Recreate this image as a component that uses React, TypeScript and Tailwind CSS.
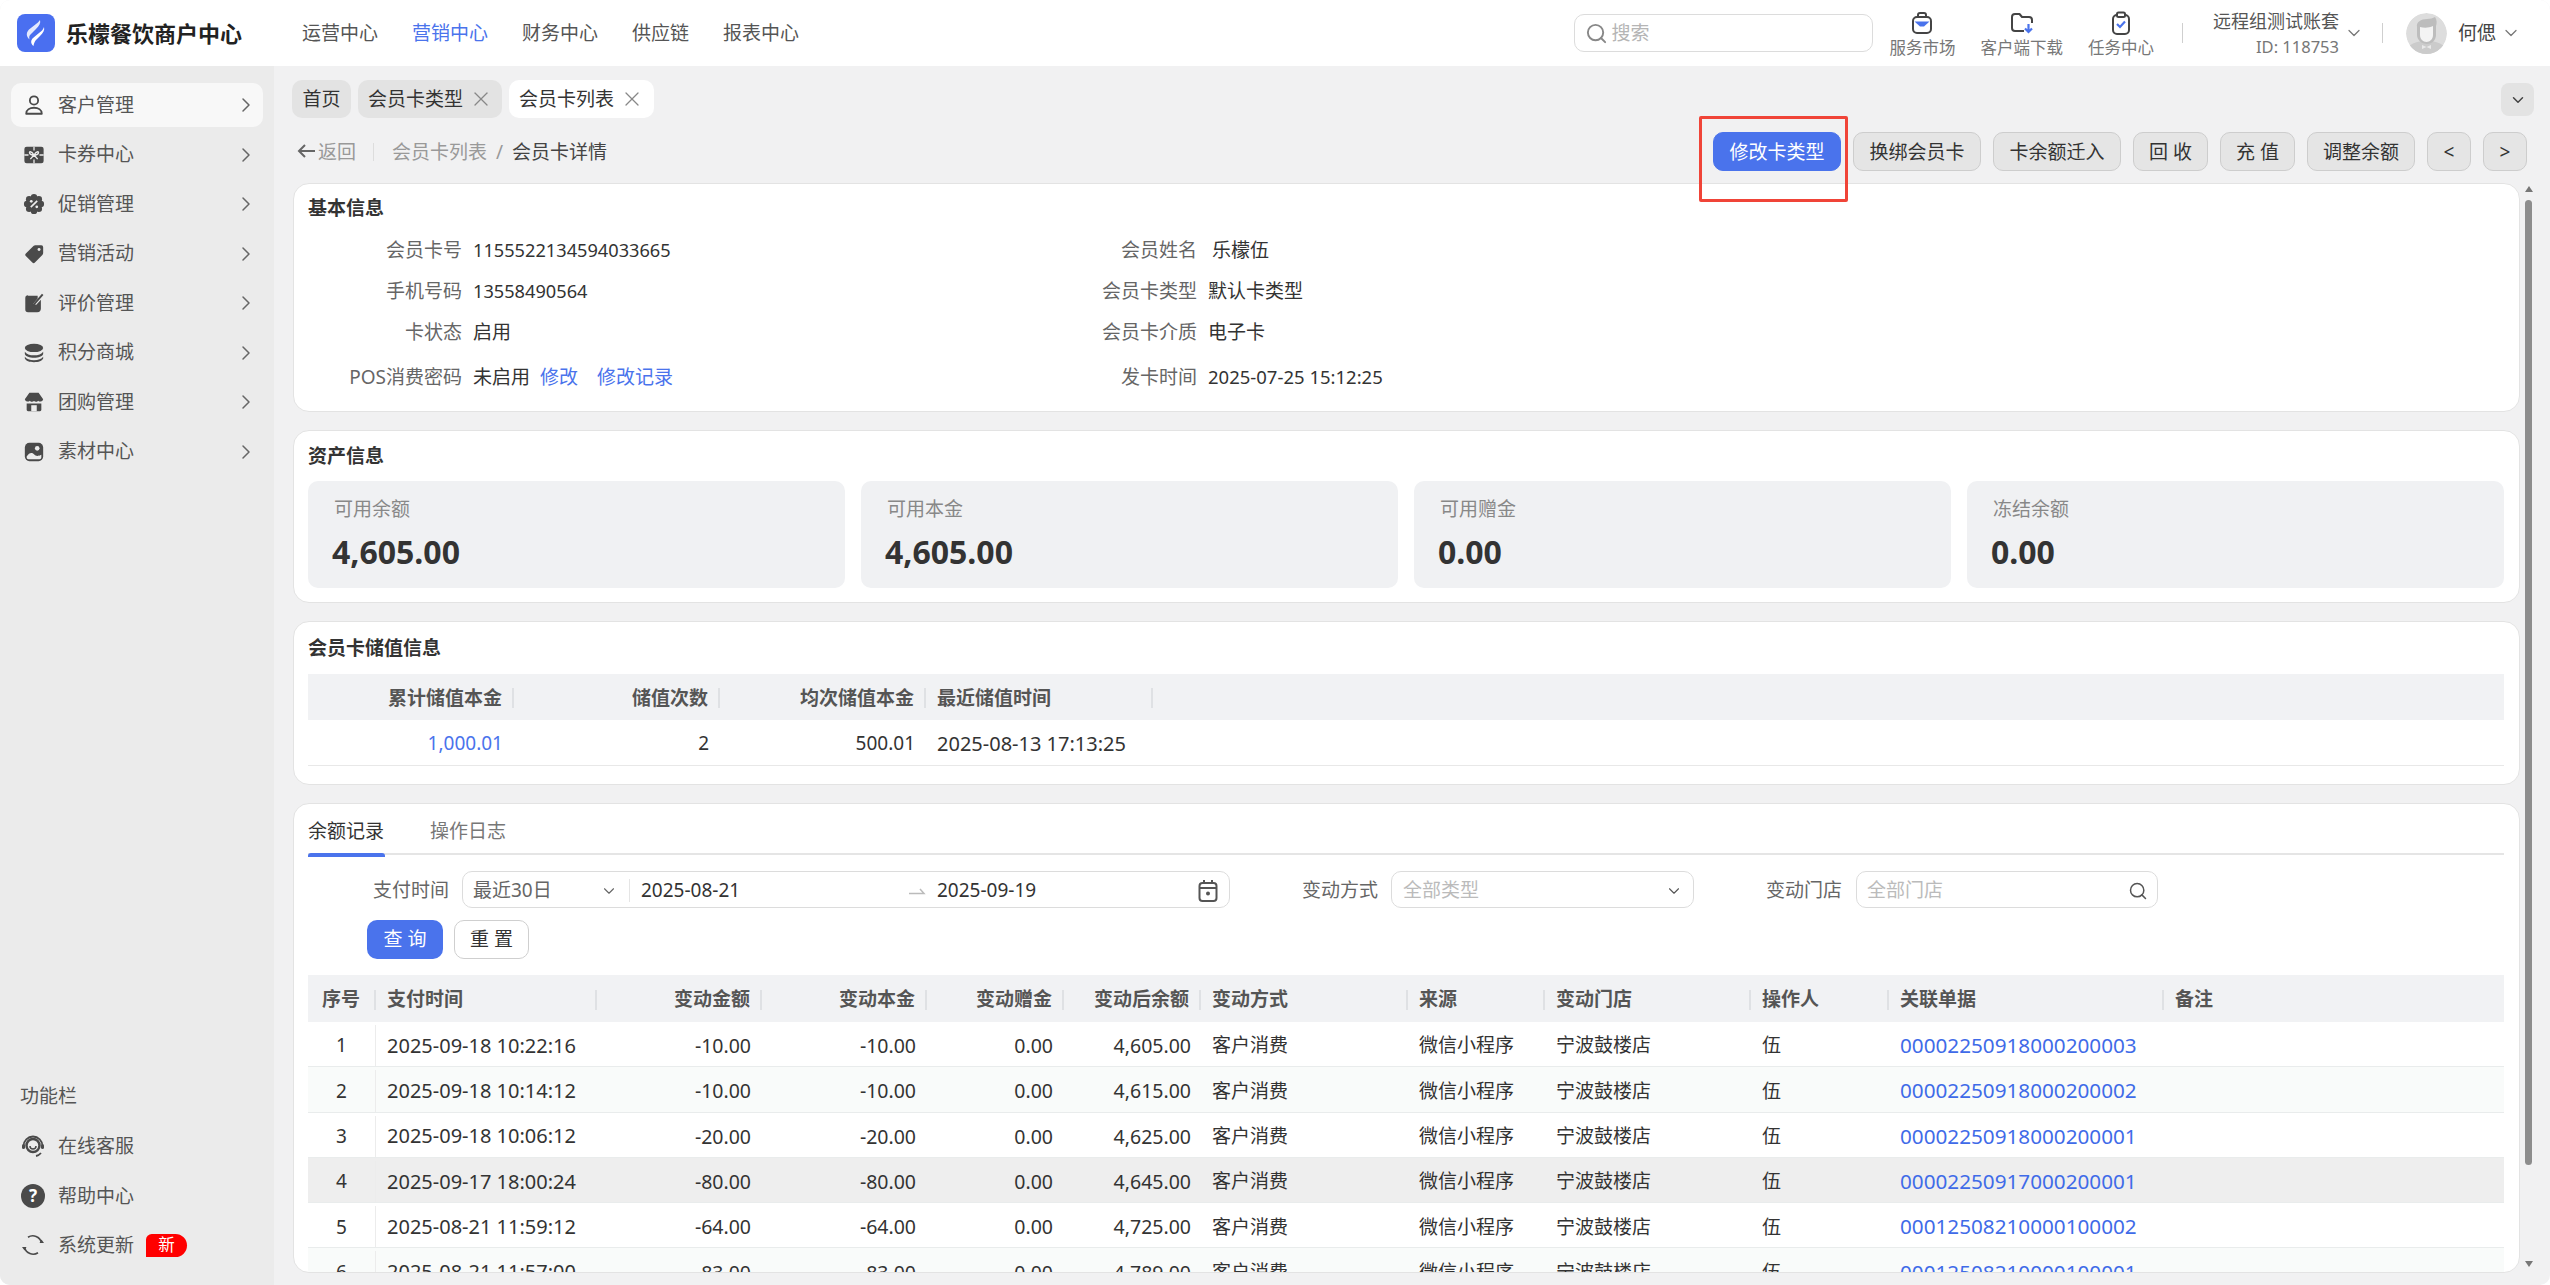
import { ChevronDown, ChevronRight, Search, X } from "lucide-react";
import type { ReactNode } from "react";

const menu = [
  { label: "客户管理", icon: "user", active: true },
  { label: "卡券中心", icon: "gift" },
  { label: "促销管理", icon: "badge" },
  { label: "营销活动", icon: "tag" },
  { label: "评价管理", icon: "review" },
  { label: "积分商城", icon: "coins" },
  { label: "团购管理", icon: "store" },
  { label: "素材中心", icon: "image" },
];

const cols = ["序号", "支付时间", "变动金额", "变动本金", "变动赠金", "变动后余额", "变动方式", "来源", "变动门店", "操作人", "关联单据", "备注"];
const rightCols = [2, 3, 4, 5];

const rows = [
  ["1", "2025-09-18 10:22:16", "-10.00", "-10.00", "0.00", "4,605.00", "00002250918000200003"],
  ["2", "2025-09-18 10:14:12", "-10.00", "-10.00", "0.00", "4,615.00", "00002250918000200002"],
  ["3", "2025-09-18 10:06:12", "-20.00", "-20.00", "0.00", "4,625.00", "00002250918000200001"],
  ["4", "2025-09-17 18:00:24", "-80.00", "-80.00", "0.00", "4,645.00", "00002250917000200001"],
  ["5", "2025-08-21 11:59:12", "-64.00", "-64.00", "0.00", "4,725.00", "00012508210000100002"],
  ["6", "2025-08-21 11:57:00", "-83.00", "-83.00", "0.00", "4,789.00", "00012508210000100001"],
];

const gridCols = "grid grid-cols-[68px_221px_165px_165px_137px_137px_207px_137px_206px_138px_275px_1fr]";

function MenuIcon({ name }: { name: string }) {
  const props = { width: 22, height: 22, viewBox: "0 0 24 24", fill: "#4a4a4a", "aria-hidden": true as const };
  if (name === "user")
    return (
      <svg {...props} fill="none" stroke="#4a4a4a" strokeWidth="2">
        <circle cx="12" cy="7" r="4.5" />
        <path d="M3.5 21.5c0-4.5 4-6.5 8.500-6.500s8.500 2 8.500 6.500z" strokeLinejoin="round" />
      </svg>
    );
  if (name === "gift")
    return (
      <svg {...props}>
        <rect x="1.500" y="3" width="21" height="18" rx="2.500" />
        <path d="M12 3v4M12 17v4M1.500 12H6M18 12h4.500" stroke="#ececec" strokeWidth="1.400" fill="none" />
        <path d="M12 12C9 7 6 8 7.500 10.500 8 11.500 10 12 12 12zM12 12c3-5 6-4 4.500-1.500C16 11.500 14 12 12 12zM12 12l-4 4.500M12 12l4 4.500" stroke="#ececec" strokeWidth="1.500" fill="none" />
      </svg>
    );
  if (name === "badge")
    return (
      <svg {...props}>
        <circle cx="12" cy="12" r="8.500" />
        <circle cx="12" cy="4.500" r="3.500" />
        <circle cx="12" cy="19.500" r="3.500" />
        <circle cx="4.500" cy="12" r="3.500" />
        <circle cx="19.500" cy="12" r="3.500" />
        <circle cx="6.700" cy="6.700" r="3.500" />
        <circle cx="17.300" cy="6.700" r="3.500" />
        <circle cx="6.700" cy="17.300" r="3.500" />
        <circle cx="17.300" cy="17.300" r="3.500" />
        <path d="m8.500 15.500 7-7" stroke="#ececec" strokeWidth="1.800" />
        <circle cx="9" cy="9" r="1.500" fill="#ececec" />
        <circle cx="15" cy="15" r="1.500" fill="#ececec" />
      </svg>
    );
  if (name === "tag")
    return (
      <svg {...props}>
        <path d="M13.500 2.500h6.500a2 2 0 0 1 2 2v6.500a3 3 0 0 1-.9 2.100l-8.100 8.200a2 2 0 0 1-2.800 0l-7.100-7.100a2 2 0 0 1 0-2.800l8.300-8a3 3 0 0 1 2.100-.9z" />
        <circle cx="17.500" cy="7" r="1.600" fill="#ececec" />
      </svg>
    );
  if (name === "review")
    return (
      <svg {...props}>
        <path d="M5.500 4h10.500v3l-5 6 3.500 1 5-5.500v9.500a4 4 0 0 1-4 4h-10a3 3 0 0 1-3-3v-12.500a3 3 0 0 1 3-3z" />
        <path d="M11 14.500 21.500 2.500" stroke="#4a4a4a" strokeWidth="2.200" />
      </svg>
    );
  if (name === "coins")
    return (
      <svg {...props}>
        <ellipse cx="12" cy="6.500" rx="10" ry="4.500" />
        <path d="M2 10.500c1.500 2.500 5.500 4 10 4s8.500-1.500 10-4v2.500c-1 2.700-5 4.200-10 4.200S3 15.700 2 13z" />
        <path d="M2 16c1.500 2.500 5.500 3.800 10 3.800s8.500-1.300 10-3.800v2c-1 2.700-5 4-10 4s-9-1.300-10-4z" />
      </svg>
    );
  if (name === "store")
    return (
      <svg {...props}>
        <path d="M7 2h10l5 7a3.200 3.200 0 0 1-5.500 1.500 3.300 3.300 0 0 1-4.500.5 3.300 3.300 0 0 1-4.500-.500A3.200 3.200 0 0 1 2 9z" />
        <path d="M4 13.500h16v7a1.500 1.500 0 0 1-1.500 1.500h-13a1.500 1.500 0 0 1-1.500-1.500z" />
        <rect x="9" y="15.500" width="6" height="6.500" fill="#ececec" />
      </svg>
    );
  return (
    <svg {...props}>
      <rect x="2" y="2" width="20" height="20" rx="5" />
      <circle cx="15.500" cy="8" r="2.500" fill="#ececec" />
      <path d="M4 17c3-5 6-4.500 8-2.500s4 2.500 8 .5v3a2 2 0 0 1-2 2H6a2 2 0 0 1-2-2z" fill="#ececec" />
    </svg>
  );
}

function TopIcon({ name }: { name: string }) {
  const props = { width: 24, height: 24, viewBox: "0 0 24 24", fill: "none", "aria-hidden": true as const };
  if (name === "market")
    return (
      <svg {...props}>
        <rect x="3" y="6" width="18" height="16" rx="4" stroke="#444" strokeWidth="2" />
        <path d="M8 6V4a2 2 0 0 1 2-2h4a2 2 0 0 1 2 2v2" stroke="#444" strokeWidth="2" />
        <path d="M4.500 10.500h15L14 15.500h-4z" fill="#4a73ec" />
      </svg>
    );
  if (name === "download")
    return (
      <svg {...props}>
        <path d="M14 20H5a3 3 0 0 1-3-3V6a3 3 0 0 1 3-3h4.500l2.500 3h7a3 3 0 0 1 3 3v3" stroke="#444" strokeWidth="2" strokeLinejoin="round" />
        <path d="M18.500 13v8m-3.500-3.500 3.500 3.500 3.500-3.500" stroke="#4a73ec" strokeWidth="2.200" />
      </svg>
    );
  return (
    <svg {...props}>
      <rect x="4" y="4" width="16" height="19" rx="4" stroke="#444" strokeWidth="2" />
      <rect x="8" y="1.500" width="8" height="4.500" rx="1.500" fill="#fff" stroke="#444" strokeWidth="2" />
      <path d="m8 13 3 3 5-5.500" stroke="#4a73ec" strokeWidth="2.200" />
    </svg>
  );
}

function Avatar() {
  return (
    <svg width="41" height="41" viewBox="0 0 41 41" className="rounded-full" aria-hidden="true">
      <circle cx="20.500" cy="20.500" r="20.500" fill="#dddddd" />
      <path d="M3 33c5-4 11-5 17.500-5S33 29 38 33a20 20 0 0 1-35 0z" fill="#cbcbcb" />
      <path d="M11 14c-1-5 4-8 10-8 3 0 6-1 8-2 2 3 2 6 1 9v9c0 5-4 9-9 9s-10-4-10-9z" fill="#bdbdbd" />
      <path d="M14 14c4 1 9 1 13-1v9c0 4-3 7-6.500 7S14 26 14 22z" fill="#f4f4f4" />
      <path d="M16 32l4.500 2 4.500-2v4l-4.500-2-4.500 2z" fill="#e9e9e9" />
    </svg>
  );
}

function Card({ children, className }: { children: ReactNode; className: string }) {
  return <section className={"rounded-[16px] border border-[#e3e3e3] bg-white pl-[14px] pr-[15px] " + className}>{children}</section>;
}

function Title({ text, height }: { text: string; height: string }) {
  return <h2 className={"flex items-center font-bold text-[#333] " + height}>{text}</h2>;
}

function Field({ label, children }: { label: string; children: ReactNode }) {
  return (
    <div className="flex items-center">
      <span className="w-[154px] text-right text-[#666]">{label}</span>
      <span className="ml-[11px] flex items-center text-[#333]">{children}</span>
    </div>
  );
}

function Stat({ label, value }: { label: string; value: string }) {
  return (
    <div className="h-[107px] rounded-[10px] bg-[#f0f1f3] pl-[24px] pt-[16px]">
      <div className="pl-[2px] leading-[24px] text-[#888]">{label}</div>
      <div className="mt-[11px] text-[32px] font-bold leading-[40px] text-[#333]">{value}</div>
    </div>
  );
}

function HeadCell({ text, right, sep = true }: { text: string; right?: boolean; sep?: boolean }) {
  return (
    <div className="flex items-center font-bold text-[#555]">
      <span className={right ? "flex-1 pr-[10px] text-right" : "flex-1 pl-[11px]"}>{text}</span>
      {sep && <span className="h-[20px] w-[2px] bg-[#dfe1e4]" />}
    </div>
  );
}

function ActionButton({ children, width, primary }: { children: ReactNode; width: string; primary?: boolean }) {
  return (
    <button
      className={
        "flex h-[39px] items-center justify-center rounded-[10px] border pt-[2px] " +
        width +
        (primary ? " border-[#4a73ec] bg-[#4a73ec] text-white" : " border-[#cdcdcd] bg-[#e5e5e5] text-[#333]")
      }
    >
      {children}
    </button>
  );
}

export default function App() {
  return (
    <div className="flex h-[1285px] w-[2550px] flex-col overflow-hidden rounded-[10px] bg-[#f1f1f2] text-[19px] text-[#333] [font-family:'Noto_Sans','Noto_Sans_CJK_SC',sans-serif]">
      <header className="flex h-[66px] shrink-0 items-center bg-white pl-[17px] pr-[29px]">
        <svg width="38" height="38" viewBox="0 0 38 38" aria-hidden="true">
          <rect width="38" height="38" rx="8" fill="#4a6ff0" />
          <path d="M23 6c1 3-1 6-4 9l-5 5c-2 2-2 3-1.500 5.500-3.500-3-3.500-7-.5-10l7-5.500c2-1.500 3-2.500 4-4z" fill="#fff" opacity=".85" />
          <path d="M27 13c1 3-1 6-4 9l-4 4c-1.500 2-2 3-2.500 6-3.500-3-2.500-6-.5-8l6-5c3-2 4-3.500 5-6z" fill="#fff" />
        </svg>
        <div className="ml-[11px] w-[180px] whitespace-nowrap text-[22px] font-bold text-[#222]">乐檬餐饮商户中心</div>
        <nav className="ml-[56px] flex gap-[34px] text-[#555]">
          <span>运营中心</span>
          <span className="text-[#4a73ec]">营销中心</span>
          <span>财务中心</span>
          <span>供应链</span>
          <span>报表中心</span>
        </nav>
        <div className="ml-auto flex h-[38px] w-[299px] items-center rounded-[10px] border border-[#dcdcdc] pl-[10px]">
          <Search size={23} color="#888" strokeWidth={2} />
          <span className="ml-[3px] text-[#b5b5b5]">搜索</span>
        </div>
        <div className="ml-[16px] flex gap-[25px] text-[16.500px] leading-[22px] text-[#777]">
          <div className="flex flex-col items-center pt-[3px]"><TopIcon name="market" /><span className="mt-[2px]">服务市场</span></div>
          <div className="flex flex-col items-center pt-[3px]"><TopIcon name="download" /><span className="mt-[2px]">客户端下载</span></div>
          <div className="flex flex-col items-center pt-[3px]"><TopIcon name="task" /><span className="mt-[2px]">任务中心</span></div>
        </div>
        <span className="ml-[28px] h-[20px] w-px bg-[#cfcfcf]" />
        <div className="ml-[30px] flex flex-col items-end">
          <span className="text-[18px] leading-[24px] text-[#555]">远程组测试账套</span>
          <span className="mt-[3px] text-[16.500px] leading-[22px] text-[#777]">ID: 118753</span>
        </div>
        <ChevronDown className="ml-[5px]" size={20} color="#777" strokeWidth={1.500} />
        <span className="ml-[18px] h-[20px] w-px bg-[#cfcfcf]" />
        <div className="ml-[23px]"><Avatar /></div>
        <span className="ml-[11px] text-[#444]">何偲</span>
        <ChevronDown className="ml-[5px]" size={20} color="#777" strokeWidth={1.500} />
      </header>

      <div className="flex min-h-0 flex-1">
        <aside className="flex w-[274px] shrink-0 flex-col justify-between bg-[#ebebeb]">
          <ul className="mt-[17px] flex flex-col gap-[5.500px] px-[11px]">
            {menu.map((m) => (
              <li key={m.label} className={"flex h-[44px] items-center rounded-[10px] pl-[12px] pr-[5px] text-[#555] " + (m.active ? "bg-[#f8f8f8]" : "")}>
                <MenuIcon name={m.icon} />
                <span className="ml-[13px] flex-1">{m.label}</span>
                <ChevronRight size={24} color="#666" strokeWidth={1.500} />
              </li>
            ))}
          </ul>
          <div className="pb-[15px] text-[#555]">
            <div className="mb-[14px] pl-[20px] leading-[24px]">功能栏</div>
            <div className="flex h-[49.500px] items-center pl-[21px]">
              <svg width="24" height="24" viewBox="0 0 24 24" fill="none" stroke="#4a4a4a" aria-hidden="true">
                <circle cx="12" cy="11.500" r="6.500" strokeWidth="2.500" />
                <path d="M2.500 12a9.500 9.500 0 0 1 19 0M15 22a9 9 0 0 0 5-3" strokeWidth="1.800" />
                <path d="M9 12a3 3 0 0 0 6 0" strokeWidth="1.500" />
                <rect x="1" y="10" width="3" height="5" rx="1.500" fill="#4a4a4a" stroke="none" />
                <rect x="20" y="10" width="3" height="5" rx="1.500" fill="#4a4a4a" stroke="none" />
              </svg>
              <span className="ml-[13px]">在线客服</span>
            </div>
            <div className="flex h-[49.500px] items-center pl-[21px]">
              <span className="flex h-[24px] w-[24px] items-center justify-center rounded-full bg-[#4a4a4a] text-[17px] font-bold text-white">?</span>
              <span className="ml-[13px]">帮助中心</span>
            </div>
            <div className="flex h-[49.500px] items-center pl-[21px]">
              <svg width="24" height="24" viewBox="0 0 24 24" fill="none" stroke="#4a4a4a" strokeWidth="1.600" aria-hidden="true">
                <path d="M20.500 9.500A9 9 0 0 0 7 4.200M3.500 14.500A9 9 0 0 0 17 19.800" />
                <path d="M18.500 10h4.500l-2.500-3.500zM1 14h4.500L3.500 17.500z" fill="#4a4a4a" stroke="none" />
              </svg>
              <span className="ml-[13px]">系统更新</span>
              <span className="ml-[12px] flex h-[23px] w-[41px] items-center justify-center rounded-[12px] rounded-bl-none rounded-tl-[6px] bg-[#ff0000] text-[16.500px] text-white">新</span>
            </div>
          </div>
        </aside>

        <main className="relative min-w-0 flex-1">
          <div className="flex items-start pl-[18px] pr-[16px] pt-[14px]">
            <div className="flex h-[38px] w-[59px] items-center justify-center rounded-[10px] bg-[#e3e3e3]">首页</div>
            <div className="ml-[7px] flex h-[38px] w-[144px] items-center rounded-[10px] bg-[#e3e3e3] pl-[10px]">
              <span>会员卡类型</span><X className="ml-[6px]" size={24} color="#888" strokeWidth={1.300} />
            </div>
            <div className="ml-[7px] flex h-[38px] w-[145px] items-center rounded-[10px] bg-white pl-[10px]">
              <span>会员卡列表</span><X className="ml-[6px]" size={24} color="#888" strokeWidth={1.300} />
            </div>
            <div className="ml-auto mt-[3px] flex h-[33px] w-[33px] items-center justify-center rounded-[8px] bg-[#e3e3e3]">
              <ChevronDown size={18} color="#444" strokeWidth={2} />
            </div>
          </div>

          <div className="mt-[14px] flex h-[39px] items-center pl-[22px] pr-[23px]">
            <svg width="19" height="18" viewBox="0 0 19 18" fill="none" stroke="#666" strokeWidth="2" aria-hidden="true">
              <path d="M19 8H3M9 2 3 8l6 6" />
            </svg>
            <span className="ml-[3px] pt-[2px] text-[#999]">返回</span>
            <span className="ml-[17px] h-[18px] w-px bg-[#ddd]" />
            <span className="ml-[18px] pt-[2px] text-[#999]">会员卡列表</span>
            <span className="ml-[9px] pt-[2px] text-[#999]">/</span>
            <span className="ml-[9px] pt-[2px] text-[#444]">会员卡详情</span>
            <div className="ml-auto flex gap-[12px]">
              <ActionButton width="w-[128px]" primary>修改卡类型</ActionButton>
              <ActionButton width="w-[128px]">换绑会员卡</ActionButton>
              <ActionButton width="w-[128px]">卡余额迁入</ActionButton>
              <ActionButton width="w-[75px]">回 收</ActionButton>
              <ActionButton width="w-[75px]">充 值</ActionButton>
              <ActionButton width="w-[108px]">调整余额</ActionButton>
              <ActionButton width="w-[44px]">&lt;</ActionButton>
              <ActionButton width="w-[44px]">&gt;</ActionButton>
            </div>
          </div>

          {/* red box marking the button the screenshot is about */}
          <div className="pointer-events-none absolute left-[1425px] top-[50px] h-[86px] w-[149px] rounded-[2px] border-[3px] border-[#f04438]" />

          <div className="mt-[12px] flex pl-[19px]">
            <div className="flex w-[2227px] flex-col gap-[18px]">
              <Card className="h-[229px]">
                <Title text="基本信息" height="h-[48px]" />
                <div className="-mt-[2px] grid grid-cols-[735px_1fr] grid-rows-[41px_41px_41px_48px]">
                  <Field label="会员卡号"><span className="text-[18.200px]">1155522134594033665</span></Field>
                  <Field label="会员姓名"><span className="ml-[4px]">乐檬伍</span></Field>
                  <Field label="手机号码"><span className="text-[18.200px]">13558490564</span></Field>
                  <Field label="会员卡类型">默认卡类型</Field>
                  <Field label="卡状态">启用</Field>
                  <Field label="会员卡介质">电子卡</Field>
                  <Field label="POS消费密码">
                    未启用<span className="ml-[10px] text-[#4a73ec]">修改</span><span className="ml-[19px] text-[#4a73ec]">修改记录</span>
                  </Field>
                  <Field label="发卡时间"><span className="text-[18.500px]">2025-07-25 15:12:25</span></Field>
                </div>
              </Card>

              <Card className="h-[173px]">
                <Title text="资产信息" height="h-[50px]" />
                <div className="grid grid-cols-4 gap-[16px]">
                  <Stat label="可用余额" value="4,605.00" />
                  <Stat label="可用本金" value="4,605.00" />
                  <Stat label="可用赠金" value="0.00" />
                  <Stat label="冻结余额" value="0.00" />
                </div>
              </Card>

              <Card className="h-[164px]">
                <Title text="会员卡储值信息" height="h-[52px]" />
                <div className="grid h-[46px] grid-cols-[206px_206px_206px_227px_1fr] bg-[#f1f2f4] pt-[2px]">
                  <HeadCell text="累计储值本金" right />
                  <HeadCell text="储值次数" right />
                  <HeadCell text="均次储值本金" right />
                  <HeadCell text="最近储值时间" />
                </div>
                <div className="grid h-[46px] grid-cols-[206px_206px_206px_227px_1fr] items-center border-b border-[#e8e8e8] pt-[2px]">
                  <span className="pr-[11px] text-right text-[#4a73ec]">1,000.01</span>
                  <span className="pr-[11px] text-right">2</span>
                  <span className="pr-[11px] text-right">500.01</span>
                  <span className="pl-[11px] text-[20px]">2025-08-13 17:13:25</span>
                </div>
              </Card>

              <Card className="h-[470px] overflow-hidden">
                <div className="flex h-[51px] gap-[45px] border-b-2 border-[#e5e5e5]">
                  <div className="relative h-[51px] w-[77px] pt-[15px] leading-[24px] text-[#333]">
                    余额记录
                    <span className="absolute bottom-[-2px] left-0 h-[4px] w-full rounded-t-[3px] bg-[#4a73ec]" />
                  </div>
                  <div className="pt-[15px] leading-[24px] text-[#777]">操作日志</div>
                </div>

                <div className="mt-[16px] flex h-[37px] items-center pl-[65px]">
                  <span className="w-[78px] pt-[2px] text-[#666]">支付时间</span>
                  <div className="ml-[11px] flex h-[37px] w-[768px] items-center rounded-[10px] border border-[#dcdcdc] pt-[2px]">
                    <span className="ml-[10px] w-[127px] text-[#666]">最近30日</span>
                    <ChevronDown size={18} color="#666" strokeWidth={1.500} />
                    <span className="ml-[11px] h-[23px] w-px bg-[#e5e5e5]" />
                    <span className="ml-[11px] w-[268px]">2025-08-21</span>
                    <svg width="17" height="8" viewBox="0 0 17 8" fill="none" stroke="#bbb" strokeWidth="1.500" aria-hidden="true">
                      <path d="M0 6.500h15L11 2" />
                    </svg>
                    <span className="ml-[11px] flex-1">2025-09-19</span>
                    <svg className="mr-[11px]" width="20" height="24" viewBox="0 0 20 24" fill="none" stroke="#555" strokeWidth="2" aria-hidden="true">
                      <rect x="1.500" y="4" width="17" height="18" rx="3" />
                      <path d="M6 1v4M14 1v4M1.500 9h17" />
                      <circle cx="10" cy="14.500" r="1" fill="#555" />
                    </svg>
                  </div>
                  <span className="ml-[72px] w-[78px] pt-[2px] text-[#666]">变动方式</span>
                  <div className="ml-[11px] flex h-[37px] w-[303px] items-center justify-between rounded-[10px] border border-[#dcdcdc] pl-[11px] pr-[10px] pt-[2px]">
                    <span className="text-[#bbb]">全部类型</span>
                    <ChevronDown size={18} color="#555" strokeWidth={1.500} />
                  </div>
                  <span className="ml-[72px] w-[78px] pt-[2px] text-[#666]">变动门店</span>
                  <div className="ml-[12px] flex h-[37px] w-[302px] items-center justify-between rounded-[10px] border border-[#dcdcdc] pl-[10px] pr-[9px] pt-[2px]">
                    <span className="text-[#bbb]">全部门店</span>
                    <Search size={20} color="#555" strokeWidth={1.800} />
                  </div>
                </div>

                <div className="mt-[12px] flex gap-[11px] pl-[59px]">
                  <button className="h-[39px] w-[76px] rounded-[10px] bg-[#4a73ec] text-white">查 询</button>
                  <button className="h-[39px] w-[75px] rounded-[10px] border border-[#cfcfcf] bg-white text-[#333]">重 置</button>
                </div>

                <div className={gridCols + " mt-[16px] h-[47px] bg-[#f1f2f4] pt-[2px]"}>
                  {cols.map((c, i) =>
                    i === 0 ? (
                      <div key={c} className="flex items-center font-bold text-[#555]">
                        <span className="flex-1 text-center">{c}</span>
                        <span className="h-[20px] w-[2px] bg-[#dfe1e4]" />
                      </div>
                    ) : (
                      <HeadCell key={c} text={c} right={rightCols.includes(i)} sep={i !== 11} />
                    ),
                  )}
                </div>
                {rows.map((r, i) => (
                  <div
                    key={r[0]}
                    className={gridCols + " h-[45.300px] items-center border-b border-[#e9ecec] pt-[3px] " + (i === 3 ? "bg-[#eeeeee]" : i % 2 === 1 ? "bg-[#f9fbfa]" : "bg-white")}
                  >
                    <span className="flex h-full items-center justify-center border-r border-[#ececec]">{r[0]}</span>
                    <span className="pl-[11px] text-[20px]">{r[1]}</span>
                    <span className="pr-[11px] text-right text-[19.500px]">{r[2]}</span>
                    <span className="pr-[11px] text-right text-[19.500px]">{r[3]}</span>
                    <span className="pr-[11px] text-right text-[19.500px]">{r[4]}</span>
                    <span className="pr-[10px] text-right text-[19.500px]">{r[5]}</span>
                    <span className="pl-[11px]">客户消费</span>
                    <span className="pl-[11px]">微信小程序</span>
                    <span className="pl-[11px]">宁波鼓楼店</span>
                    <span className="pl-[11px]">伍</span>
                    <span className="pl-[11px] text-[20.700px] text-[#3f6be8]">{r[6]}</span>
                    <span />
                  </div>
                ))}
              </Card>
            </div>

            {/* page scrollbar */}
            <div className="ml-[5px] flex h-[1089px] w-[7px] flex-col items-center">
              <span className="mt-[3px] h-0 w-0 border-x-[4px] border-b-[6px] border-x-transparent border-b-[#777]" />
              <span className="mt-[8px] h-[965px] w-[7px] rounded-full bg-[#8d8d8d]" />
              <span className="mt-auto mb-[5px] h-0 w-0 border-x-[4px] border-t-[6px] border-x-transparent border-t-[#777]" />
            </div>
          </div>
        </main>
      </div>
    </div>
  );
}
